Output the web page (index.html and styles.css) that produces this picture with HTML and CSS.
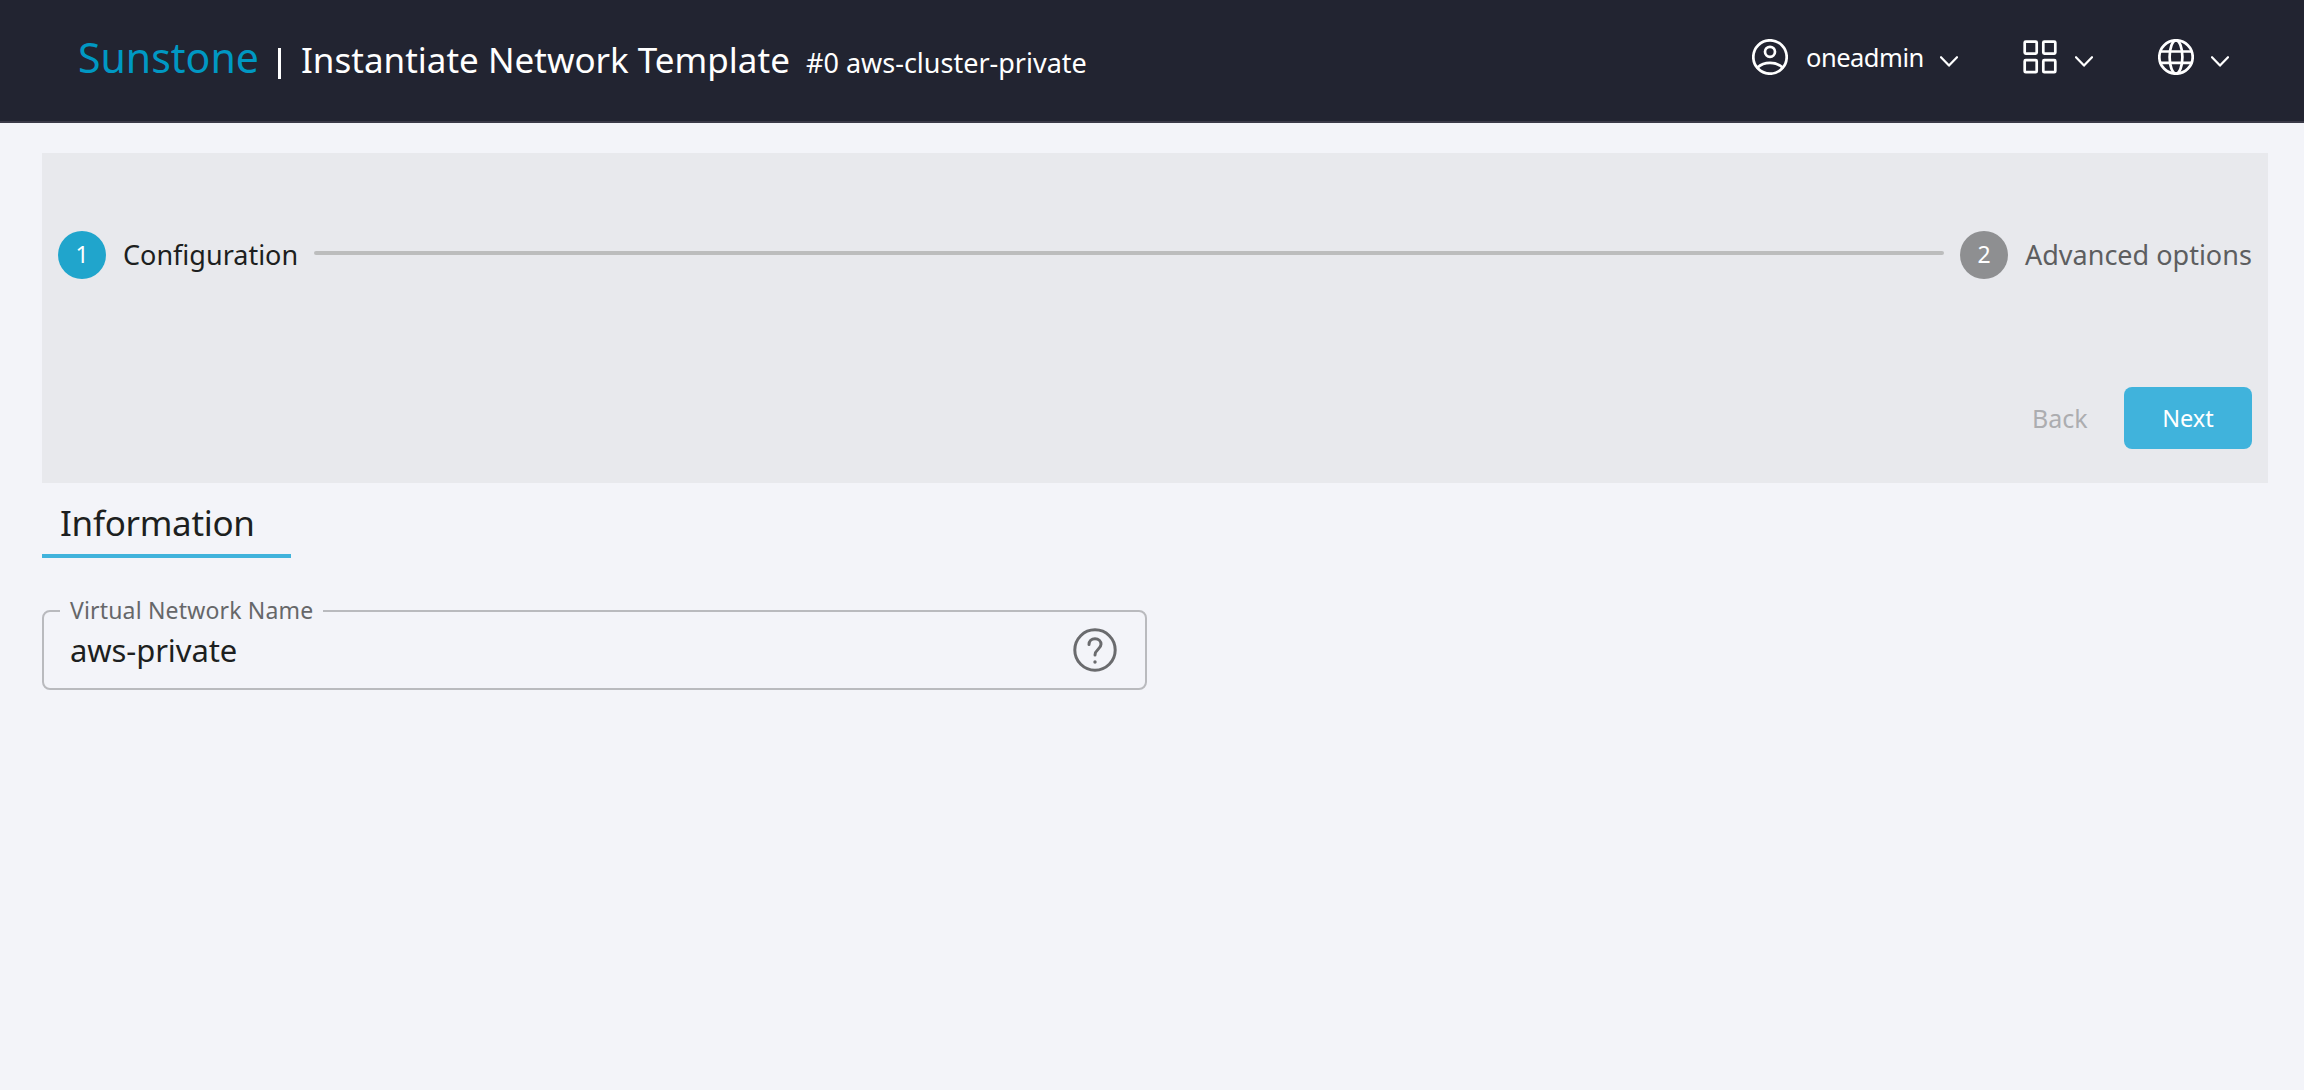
FILE: index.html
```html
<!DOCTYPE html>
<html lang="en">
<head>
<meta charset="utf-8">
<title>Sunstone</title>
<link rel="stylesheet" href="styles.css">
</head>
<body>
<header class="topbar">
  <div class="heading">
    <span class="brand">Sunstone</span>
    <span class="divider"></span>
    <h1 class="title">Instantiate Network Template</h1>
    <span class="subtitle">#0 aws-cluster-private</span>
  </div>
  <nav class="actions">
    <button class="action action-user">
      <svg class="icon" viewBox="0 0 36 36"><circle cx="18" cy="18" r="16.7"/><circle cx="18" cy="12.8" r="5"/><path d="M5.5 28.5C12 22.3 24 22.3 30.5 28.5"/></svg>
      <span class="user">oneadmin</span>
      <svg class="chevron" viewBox="0 0 18 11"><path d="M1 1.2l8 8.4 8-8.4"/></svg>
    </button>
    <button class="action action-apps">
      <svg class="icon" viewBox="0 0 36 36"><rect x="2.7" y="2.6" width="12" height="12" rx="1"/><rect x="21.3" y="2.6" width="12" height="12" rx="1"/><rect x="2.7" y="21.2" width="12" height="12" rx="1"/><rect x="21.3" y="21.2" width="12" height="12" rx="1"/></svg>
      <svg class="chevron" viewBox="0 0 18 11"><path d="M1 1.2l8 8.4 8-8.4"/></svg>
    </button>
    <button class="action action-zone">
      <svg class="icon" viewBox="0 0 36 36"><circle cx="18" cy="18" r="16.7"/><ellipse cx="18" cy="18" rx="6.4" ry="16.7"/><path d="M2.5 12.5h31M2.5 23.8h31"/></svg>
      <svg class="chevron" viewBox="0 0 18 11"><path d="M1 1.2l8 8.4 8-8.4"/></svg>
    </button>
  </nav>
</header>
<main class="content">
  <section class="stepper">
    <ol class="steps">
      <li class="step"><span class="badge badge-active">1</span><span class="step-label label-config">Configuration</span></li>
      <li class="connector"></li>
      <li class="step"><span class="badge">2</span><span class="step-label label-advanced">Advanced options</span></li>
    </ol>
    <div class="buttons">
      <button class="back" disabled>Back</button>
      <button class="next">Next</button>
    </div>
  </section>
  <div class="tabs"><span class="tab">Information</span></div>
  <fieldset class="field">
    <legend class="legend">Virtual Network Name</legend>
    <span class="value">aws-private</span>
    <svg class="help" viewBox="0 0 44 44"><circle cx="22" cy="22" r="20.2"/><path d="M16 16.500c0-3.400 2.500-5.800 6-5.800s6 2.400 6 5.600c0 4.800-6 5.200-6 10.700"/><circle class="dot" cx="22" cy="34" r="1.7"/></svg>
  </fieldset>
</main>
</body>
</html>
```
FILE: styles.css
```css
* { box-sizing: border-box; }
body { margin: 0; min-height: 100vh; background: #f3f4f9; color: #1d1f20; font-family: "Noto Sans", "Open Sans", sans-serif; white-space: nowrap; }
button { display: flex; align-items: center; padding: 0; border: 0; background: none; color: inherit; font: inherit; text-align: left; }
svg { display: block; flex: none; fill: none; stroke: currentColor; stroke-width: 2.7; stroke-linecap: round; stroke-linejoin: round; }

.topbar { display: flex; justify-content: space-between; height: 123px; padding: 0 75px 0 78px; border-bottom: 2px solid #3a3a48; background: #222431; color: #fff; }
.heading { display: flex; align-items: baseline; padding-top: 29px; }
.brand { width: 199px; color: #0098c3; font-size: 41px; line-height: 56px; }
.divider { align-self: flex-start; width: 3px; height: 31px; margin: 19px 20px 0 1px; background: #fff; }
.title { width: 505px; margin: 0; font-size: 35px; font-weight: 400; line-height: 48px; }
.subtitle { font-size: 27px; line-height: 40px; }
.actions { display: flex; height: 114px; }
.icon { width: 36px; height: 36px; }
.chevron { width: 18px; height: 11px; margin-top: 8px; stroke-width: 2.2; }
.action-user { margin-right: 64px; }
.user { width: 134px; margin-left: 18px; font-size: 25.5px; letter-spacing: -0.5px; }
.action-apps { margin-right: 65px; }
.action-apps .icon, .action-zone .icon { margin-right: 17px; }

.content { padding: 30px 36px 0 42px; }
.stepper { height: 330px; padding: 78px 16px 0; background: #e8e9ed; }
.steps { display: flex; align-items: center; margin: 0; padding: 0; list-style: none; }
.step { display: flex; align-items: center; }
.badge { width: 48px; height: 48px; margin-right: 17px; border-radius: 50%; background: #8e8f91; color: #fff; font-size: 23px; line-height: 47px; text-align: center; }
.badge-active { background: #20a5cc; }
.step-label { font-size: 27px; line-height: 40px; }
.label-config { width: 175px; }
.label-advanced { width: 227px; color: #5d5e60; }
.connector { flex: 1; height: 4px; margin: -4px 16px 0; border-radius: 2px; background: #bcbdbd; }
.buttons { display: flex; justify-content: flex-end; align-items: center; margin-top: 108px; }
.back { width: 92px; color: #acadb0; font-size: 25px; }
.next { justify-content: center; width: 128px; height: 62px; border-radius: 8px; background: #40b3dc; color: #fff; font-size: 23.5px; }
.tabs { display: flex; height: 75px; margin-bottom: 40px; }
.tab { width: 249px; padding: 16px 0 0 18px; border-bottom: 4px solid #40b3dc; font-size: 35px; letter-spacing: -0.3px; line-height: 48px; }
.field { display: flex; align-items: center; width: 1105px; height: 92px; margin: 0; padding: 0 28px 12px 26px; border: 2px solid #b9babe; border-radius: 8px; }
.legend { margin-left: -10px; padding: 0 10px 2px; color: #666769; font-size: 23px; letter-spacing: 0.17px; line-height: 24px; }
.value { flex: 1; font-size: 31px; letter-spacing: -0.1px; line-height: 44px; }
.help { width: 44px; height: 44px; color: #6a6b6e; stroke-width: 3; }
.help .dot { fill: currentColor; stroke: none; }
```
